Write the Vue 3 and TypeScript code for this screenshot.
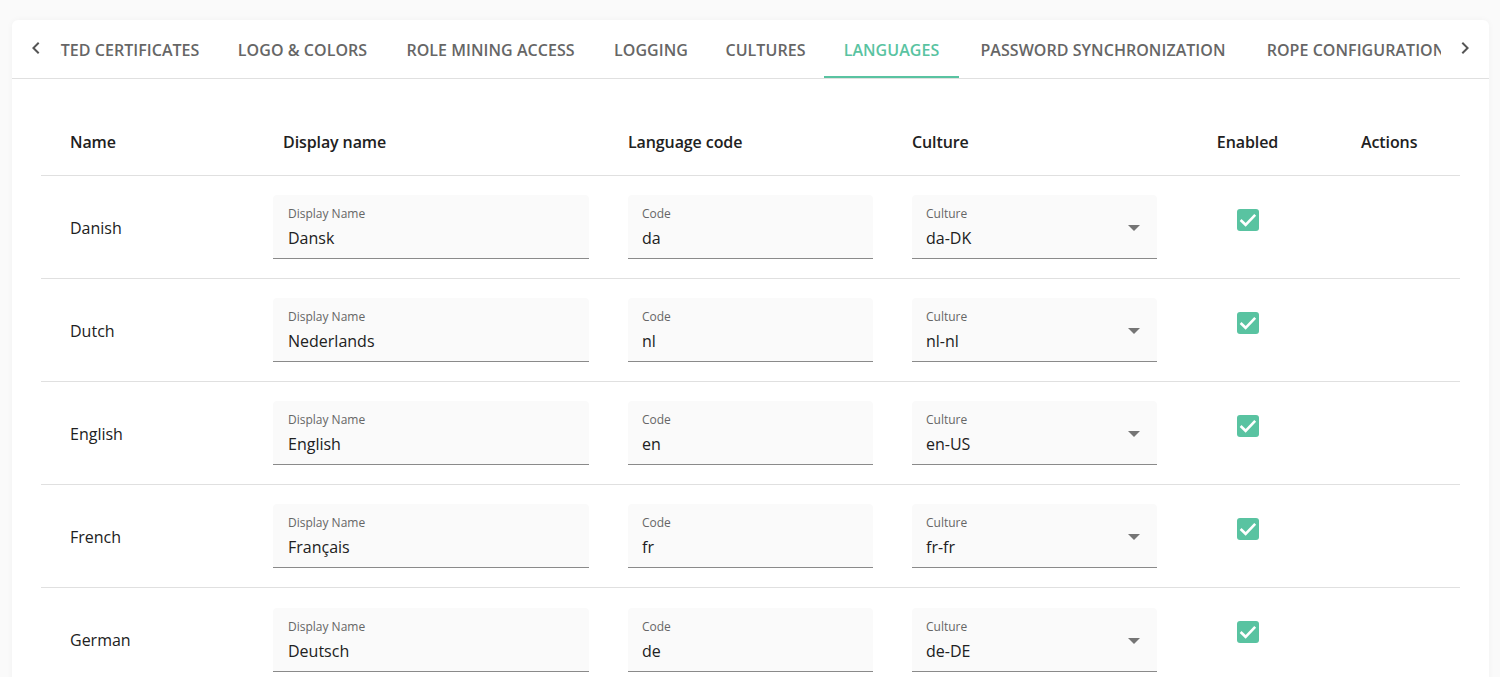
<script setup lang="ts">
interface Tab {
  label: string
  width: number
}

interface Language {
  name: string
  display: string
  code: string
  culture: string
}

const tabs: Tab[] = [
  { label: 'TRUSTED CERTIFICATES', width: 218 },
  { label: 'LOGO & COLORS', width: 167 },
  { label: 'ROLE MINING ACCESS', width: 209 },
  { label: 'LOGGING', width: 112 },
  { label: 'CULTURES', width: 117 },
  { label: 'LANGUAGES', width: 135 },
  { label: 'PASSWORD SYNCHRONIZATION', width: 288 },
  { label: 'ROPE CONFIGURATION', width: 218 },
]

const languages: Language[] = [
  { name: 'Danish', display: 'Dansk', code: 'da', culture: 'da-DK' },
  { name: 'Dutch', display: 'Nederlands', code: 'nl', culture: 'nl-nl' },
  { name: 'English', display: 'English', code: 'en', culture: 'en-US' },
  { name: 'French', display: 'Français', code: 'fr', culture: 'fr-fr' },
  { name: 'German', display: 'Deutsch', code: 'de', culture: 'de-DE' },
]
</script>

<template>
  <div class="page">
    <section class="card">
      <nav class="tabbar">
        <button class="arrow" aria-label="Previous">
          <svg width="24" height="24" viewBox="0 0 24 24"><path d="M15.41 7.41 14 6l-6 6 6 6 1.41-1.41L10.83 12z" /></svg>
        </button>
        <div class="viewport">
          <div class="track">
            <div
              v-for="tab in tabs"
              :key="tab.label"
              class="tab"
              :class="{ active: tab.label === 'LANGUAGES' }"
              :style="{ width: tab.width + 'px' }"
            >{{ tab.label }}</div>
          </div>
        </div>
        <button class="arrow" aria-label="Next">
          <svg width="24" height="24" viewBox="0 0 24 24"><path d="M8.59 16.59 10 18l6-6-6-6-1.41 1.41L13.17 12z" /></svg>
        </button>
      </nav>

      <div class="table">
        <div class="row head">
          <div class="cell-name">Name</div>
          <div class="head-display">Display name</div>
          <div>Language code</div>
          <div>Culture</div>
          <div class="cell-enabled">Enabled</div>
          <div class="head-actions">Actions</div>
        </div>

        <div v-for="lang in languages" :key="lang.name" class="row body">
          <div class="cell-name name-text">{{ lang.name }}</div>
          <div class="field display">
            <span class="label">Display Name</span>
            <span class="value">{{ lang.display }}</span>
          </div>
          <div class="field code">
            <span class="label">Code</span>
            <span class="value">{{ lang.code }}</span>
          </div>
          <div class="field code">
            <span class="label">Culture</span>
            <span class="value">{{ lang.culture }}</span>
            <svg class="caret" width="12" height="6" viewBox="0 0 12 6"><path d="M0 0h12L6 6z" /></svg>
          </div>
          <div class="cell-enabled check-cell">
            <span class="check">
              <svg width="22" height="22" viewBox="0 0 22 22"><path d="M3.6 11l5 4.8 9.6-10" /></svg>
            </span>
          </div>
          <div></div>
        </div>
      </div>
    </section>
  </div>
</template>

<style>
html, body {
  margin: 0;
  height: 677px;
  overflow: hidden;
  background: #fafafa;
}
</style>

<style scoped>
.page {
  height: 677px;
  overflow: hidden;
  padding: 20px 11px 0 12px;
  box-sizing: border-box;
  font-family: "Open Sans", "Noto Sans", sans-serif;
  color: #212121;
}
.card {
  background: #fff;
  border-radius: 6px;
  box-shadow: 0 0 6px rgba(0, 0, 0, 0.04);
  height: 760px;
}
.tabbar {
  display: flex;
  height: 59px;
  box-sizing: border-box;
  border-bottom: 1px solid #e0e0e0;
}
.arrow {
  flex: none;
  width: 48px;
  height: 58px;
  padding: 0 0 2px;
  border: 0;
  background: none;
  display: flex;
  align-items: center;
  justify-content: center;
}
.arrow svg {
  fill: #555;
}
.viewport {
  flex: 1;
  overflow: hidden;
  min-width: 0;
}
.track {
  display: flex;
  margin-left: -59px;
  height: 58px;
}
.tab {
  flex: none;
  font-size: 16px;
  font-weight: 600;
  letter-spacing: 0.05px;
  line-height: 60px;
  text-align: center;
  color: #666;
  white-space: nowrap;
  box-sizing: border-box;
}
.tab.active {
  color: #59c3a1;
  border-bottom: 2px solid #59c3a1;
}
.table {
  margin: 0 29px;
}
.row {
  display: grid;
  grid-template-columns: 232px 355px 284px 284px 103px 161px;
  border-bottom: 1px solid #e0e0e0;
  box-sizing: border-box;
}
.head {
  height: 96.95px;
  align-items: center;
  padding-top: 31px;
  font-size: 16px;
  font-weight: 600;
  letter-spacing: -0.1px;
}
.body {
  height: 103.13px;
  align-items: center;
  font-size: 16px;
}
.cell-name {
  padding-left: 29px;
}
.name-text {
  padding-top: 1.8px;
}
.head-display {
  padding-left: 10px;
}
.head-actions {
  padding-left: 62px;
}
.cell-enabled {
  text-align: center;
}
.check-cell {
  align-self: start;
  padding-top: 33px;
}
.field {
  position: relative;
  height: 64px;
  box-sizing: border-box;
  background: #fafafa;
  border-bottom: 1px solid #8a8a8a;
  border-radius: 4px 4px 0 0;
  padding: 11px 14px 0;
  display: flex;
  flex-direction: column;
}
.field.display {
  width: 316px;
  padding-left: 15px;
}
.field.code {
  width: 245px;
}
.label {
  font-size: 12px;
  line-height: 16px;
  color: #666;
}
.value {
  font-size: 16px;
  line-height: 22px;
  margin-top: 5px;
  color: #212121;
}
.caret {
  position: absolute;
  right: 17px;
  top: 30px;
  fill: #757575;
}
.check {
  display: inline-flex;
  width: 22px;
  height: 22px;
  border-radius: 3px;
  background: #59c3a1;
}
.check path {
  fill: none;
  stroke: #fff;
  stroke-width: 2.6;
}
</style>
